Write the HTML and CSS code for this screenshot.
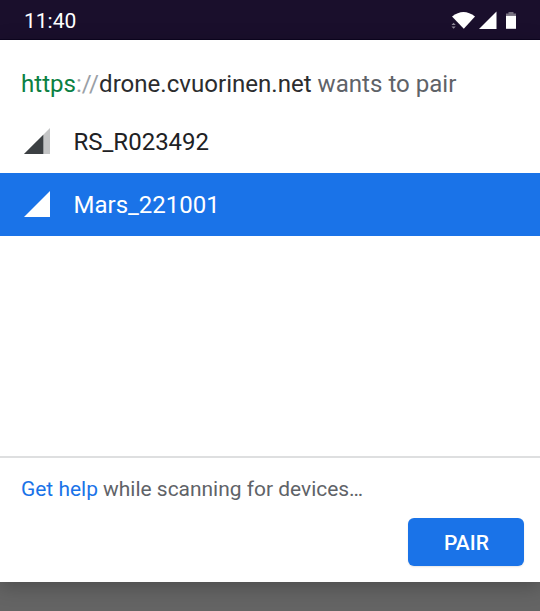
FILE: index.html
```html
<!DOCTYPE html>
<html lang="en">
<head>
<meta charset="utf-8">
<title>Pair device</title>
<link rel="stylesheet" href="styles.css">
</head>
<body>
<header class="status">
  <span class="clock">11:40</span>
  <svg class="status-icons" width="66" height="20" viewBox="0 0 66 20">
    <path fill="#fff" d="M1 6.500Q12.500 -2.500 24 6.500L12.800 18.800Z"/>
    <path fill="#8c8795" d="M0.500 15L2.600 12.700L4.700 15ZM0.500 16.500L2.600 18.800L4.700 16.500Z"/>
    <path fill="#fff" d="M45.500 1.500V19H28Z"/>
    <path fill="#fff" d="M55 5.500H65V18.800H55Z"/>
    <path fill="#777180" d="M57.500 2H62.500V3.500H65V5.500H55V3.500H57.500Z"/>
  </svg>
</header>
<main class="dialog">
  <h1 class="title"><span class="scheme">https</span><span class="sep">://</span><span class="host">drone.cvuorinen.net</span> wants to pair</h1>
  <ul class="devices">
    <li class="device">
      <svg class="signal" width="26" height="26" viewBox="0 0 26 26"><path fill="#c4c5c6" d="M26 0V26H0Z"/><path fill="#3c4043" d="M19.300 6.700V26H0Z"/></svg>
      <span class="name">RS_R023492</span>
    </li>
    <li class="device selected">
      <svg class="signal" width="26" height="26" viewBox="0 0 26 26"><path fill="#fff" d="M26 0V26H0Z"/></svg>
      <span class="name">Mars_221001</span>
    </li>
  </ul>
  <footer class="footer">
    <p class="help"><a class="link">Get help</a> while scanning for devices…</p>
    <button class="pair">PAIR</button>
  </footer>
</main>
</body>
</html>
```
FILE: styles.css
```css
* { box-sizing: border-box; margin: 0; padding: 0; }
body {
  height: 611px;
  overflow: hidden;
  background: #646464;
  font-family: Roboto, sans-serif;
  color: #5f6368;
}
.status {
  height: 40px;
  padding: 0 23px 0 24px;
  background: #1a0f2c;
  border-bottom: 1px solid #0d0520;
  color: #fff;
  display: flex;
  align-items: center;
  justify-content: space-between;
}
.clock { font-size: 21px; line-height: 38px; padding-top: 2px; }
.status-icons { margin-top: 1px; }
.dialog {
  height: 542px;
  background: #fff;
  display: flex;
  flex-direction: column;
  box-shadow: 0 4px 18px rgba(0, 0, 0, .25);
}
.title {
  padding: 28px 21px 0;
  height: 70px;
  font-size: 24.08px;
  line-height: 32px;
  font-weight: 400;
  white-space: nowrap;
}
.scheme { color: #0b8043; }
.sep { color: #9aa0a6; }
.host { color: #2b2c2e; }
.devices { flex: 1; list-style: none; }
.device {
  height: 63px;
  padding-left: 24px;
  display: flex;
  align-items: center;
  gap: 23.5px;
  font-size: 24px;
  color: #202124;
}
.signal { margin-bottom: 2px; }
.selected { background: #1a73e8; color: #fff; }
.footer {
  height: 126px;
  border-top: 2px solid #dedfe0;
  padding: 16px 16px 0 21px;
  display: flex;
  flex-direction: column;
}
.help { font-size: 20.950px; line-height: 30px; white-space: nowrap; }
.link { color: #1a73e8; }
.pair {
  align-self: flex-end;
  margin-top: 14px;
  padding: 2px 0 0 1px;
  width: 116px;
  height: 48px;
  border: 0;
  border-radius: 6px;
  background: #1a73e8;
  box-shadow: 0 1px 2px rgba(0, 0, 0, .1);
  color: #fff;
  font: 500 21px Roboto, sans-serif;
}
```
